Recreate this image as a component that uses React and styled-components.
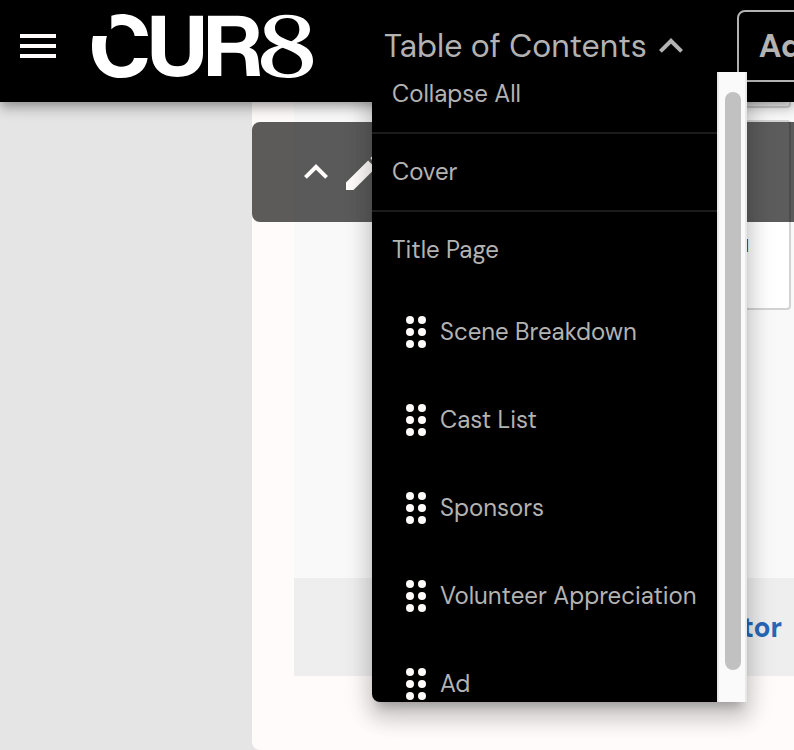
import { useLayoutEffect, useRef } from 'react'
import styled, { createGlobalStyle } from 'styled-components'

const GlobalStyle = createGlobalStyle`
  * { box-sizing: border-box; }
  body {
    margin: 0;
    background: #e5e5e5;
    font-family: 'DM Sans', Inter, 'Liberation Sans', sans-serif;
  }
  button { font-family: inherit; cursor: pointer; }
`

const Page = styled.div`
  min-height: 100vh;
  overflow-x: clip;
`

// header
const Header = styled.header`
  position: relative;
  z-index: 2;
  display: flex;
  align-items: center;
  gap: 30px;
  padding: 10px 14px 20px;
  background: #000;
  box-shadow: 0 4px 8px -2px rgba(0, 0, 0, 0.2), 0 8px 10px rgba(0, 0, 0, 0.14),
    0 2px 20px rgba(0, 0, 0, 0.12);
`

const IconButton = styled.button`
  display: flex;
  flex-shrink: 0;
  padding: 0;
  border: 0;
  background: none;
  color: #fffbfa;
`

const Icon = styled.svg`
  display: block;
  flex-shrink: 0;
  width: 48px;
  height: 48px;
  fill: currentColor;
`

const LogoLink = styled.a`
  flex-shrink: 0;
  margin-right: 28px;
  color: #fff;
  svg { display: block; fill: currentColor; }
`

const Dropdown = styled.div`
  position: relative;
  flex-shrink: 0;
`

const DropdownButton = styled.button`
  display: flex;
  align-items: center;
  padding: 0 12px;
  border: 0;
  background: none;
  color: #b3b3b3;
  font-size: 32px;
  line-height: 48px;
  white-space: nowrap;
`

const OutlineButton = styled.button`
  flex-shrink: 0;
  height: 72px;
  padding: 0 20px;
  border: 2px solid #b3b3b3;
  border-radius: 8px;
  background: none;
  color: #b3b3b3;
  font-size: 32px;
  font-weight: 700;
`

// contents menu
const Menu = styled.div`
  position: absolute;
  top: 50px;
  left: 0;
  display: flex;
  width: 375px;
  max-height: calc(100vh - 120px);
  overflow: hidden;
  border-bottom-left-radius: 8px;
  background: #000;
  box-shadow: 0 10px 10px -6px rgba(0, 0, 0, 0.2), 0 16px 20px 2px rgba(0, 0, 0, 0.14),
    0 6px 28px 4px rgba(0, 0, 0, 0.12);
`

const MenuList = styled.ul`
  flex: 1;
  margin: 0;
  padding: 0;
  overflow-y: auto;
  scrollbar-width: none;
  list-style: none;
`

const MenuItem = styled.li`
  border-bottom: ${p => (p.$divider ? '2px solid #1c1c1c' : '0')};
`

const MenuLink = styled.a`
  display: flex;
  align-items: center;
  height: ${p => (p.$nested ? '88px' : '76px')};
  padding: 0 20px;
  color: #b3b3b3;
  font-size: 24px;
  line-height: 30px;
  text-decoration: none;
  white-space: nowrap;
`

const Track = styled.div`
  display: flex;
  flex-shrink: 0;
  width: 30px;
  padding: 20px 4px 32px 6px;
  border: solid #e8e8e8;
  border-width: 0 2px;
  background: #fafafa;
`

const Thumb = styled.div`
  flex: 1;
  border-radius: 8px;
  background: #c1c1c1;
`

// sheet
const Sheet = styled.main`
  position: relative;
  margin-left: 252px;
  padding: 0 0 74px 42px;
  overflow: hidden;
  border-bottom-left-radius: 8px;
  background: #fffbfa;
`

const Fields = styled.section`
  display: flex;
  flex-direction: column;
  gap: 12px;
  min-height: 476px;
  padding-left: 120px;
  padding-right: 3px;
  background: #f9f9f9;
`

const Field = styled.div`
  min-height: 190px;
  padding: 112px 40px 0 0;
  border: 2px solid #d3d3d3;
  border-radius: 4px;
  background: #fff;
  color: #333;
  font-size: 18px;
  text-align: right;
`

// bottom edge of the field scrolled under the header
const FieldEnd = styled.div`
  height: 6px;
  border: 2px solid #d3d3d3;
  border-top: 0;
  border-radius: 0 0 4px 4px;
`

const Toolbar = styled.div`
  position: absolute;
  top: 20px;
  left: 0;
  right: 0;
  display: flex;
  align-items: center;
  height: 100px;
  padding-left: 40px;
  border-radius: 8px 0 0 8px;
  background: rgba(0, 0, 0, 0.64);
`

const Footer = styled.footer`
  display: flex;
  align-items: center;
  justify-content: flex-end;
  height: 98px;
  padding-right: 12px;
  background: #eee;
`

const FooterLink = styled.a`
  color: #2867b5;
  font-size: 28px;
  font-weight: 700;
  text-decoration: none;
`

const contents = [
  { label: 'Collapse All', divider: true },
  { label: 'Cover', divider: true },
  { label: 'Title Page' },
  { label: 'Scene Breakdown', nested: true },
  { label: 'Cast List', nested: true },
  { label: 'Sponsors', nested: true },
  { label: 'Volunteer Appreciation', nested: true },
  { label: 'Ad', nested: true },
]

const ChevronUp = () => (
  <Icon viewBox="0 0 24 24" aria-hidden="true">
    <path d="M12 8l-6 6 1.41 1.41L12 10.83l4.59 4.58L18 14z" />
  </Icon>
)

const DragIcon = styled(Icon)`
  color: #fffbfa;
`

const Logo = () => (
  <svg width="222" height="64" viewBox="276 42 666 192" aria-hidden="true">
    <path d="M334 47Q348 42 365 42C410 42 440 68 444 108H404C401 88 386 75 366 75C352 75 342 79 334 88Z" />
    <path d="M279 108H321C316 120 316 155 321 166C326 188 342 200 364 200C386 200 398 190 402 174H443C438 212 408 234 362 234C310 234 276 196 276 140C276 128 277 118 279 108Z" />
    <path d="M455 47H495V160C495 186 508 199 532 199C556 199 569 186 569 160V47H609V160C609 206 580 231 532 231C484 231 455 206 455 160Z" />
    <path fillRule="evenodd" d="M624 47H715C755 47 776 68 776 98C776 120 766 135 748 143C766 148 773 160 775 180L780 228H740L737 186C736 166 728 158 708 158H664V228H624ZM664 79V128H708C728 128 738 120 738 103C738 87 728 79 708 79Z" />
    <path fillRule="evenodd" d="M862 44C902 44 930 60 930 88C930 108 914 122 889 129C922 139 939 156 939 182C939 214 908 234 862 234C814 234 783 214 783 184C783 160 803 144 836 137C808 127 793 112 793 90C793 62 822 44 862 44ZM862 54C838 54 825 66 825 84C825 103 842 113 874 124C890 116 898 104 898 88C898 66 884 54 862 54ZM848 143C826 151 817 166 817 184C817 208 835 223 864 223C890 223 906 211 906 190C906 168 888 158 848 143Z" />
  </svg>
)

function ContentsMenu() {
  const listRef = useRef(null)

  useLayoutEffect(() => {
    listRef.current.scrollTop = 16
  }, [])

  return (
    <Menu>
      <MenuList ref={listRef}>
        {contents.map(item => (
          <MenuItem key={item.label} $divider={item.divider}>
            <MenuLink href="#" $nested={item.nested}>
              {item.nested && (
                <DragIcon viewBox="0 0 48 48" aria-hidden="true">
                  {[12, 24, 36].map(y => (
                    <g key={y}>
                      <circle cx="18" cy={y} r="4" />
                      <circle cx="30" cy={y} r="4" />
                    </g>
                  ))}
                </DragIcon>
              )}
              {item.label}
            </MenuLink>
          </MenuItem>
        ))}
      </MenuList>
      <Track aria-hidden="true">
        <Thumb />
      </Track>
    </Menu>
  )
}

export default function App() {
  return (
    <Page>
      <GlobalStyle />
      <Header>
        <IconButton aria-label="Menu">
          <Icon viewBox="0 0 24 24" aria-hidden="true">
            <path d="M3 18h18v-2H3v2zm0-5h18v-2H3v2zm0-7v2h18V6H3z" />
          </Icon>
        </IconButton>
        <LogoLink href="#" aria-label="CUR8">
          <Logo />
        </LogoLink>
        <Dropdown>
          <DropdownButton aria-expanded="true">
            Table of Contents
            <ChevronUp />
          </DropdownButton>
          <ContentsMenu />
        </Dropdown>
        <OutlineButton>Add</OutlineButton>
      </Header>
      <Sheet>
        <Fields>
          <FieldEnd />
          <Field>l</Field>
        </Fields>
        <Footer>
          <FooterLink href="#">Editor</FooterLink>
        </Footer>
        <Toolbar>
          <IconButton aria-label="Collapse">
            <ChevronUp />
          </IconButton>
          <IconButton aria-label="Edit">
            <Icon viewBox="0 0 24 24" aria-hidden="true">
              <path d="M3 17.25V21h3.75L17.81 9.94l-3.75-3.75L3 17.25zM20.71 7.04a1 1 0 0 0 0-1.41l-2.34-2.34a1 1 0 0 0-1.41 0l-1.83 1.83 3.75 3.75 1.83-1.83z" />
            </Icon>
          </IconButton>
        </Toolbar>
      </Sheet>
    </Page>
  )
}
